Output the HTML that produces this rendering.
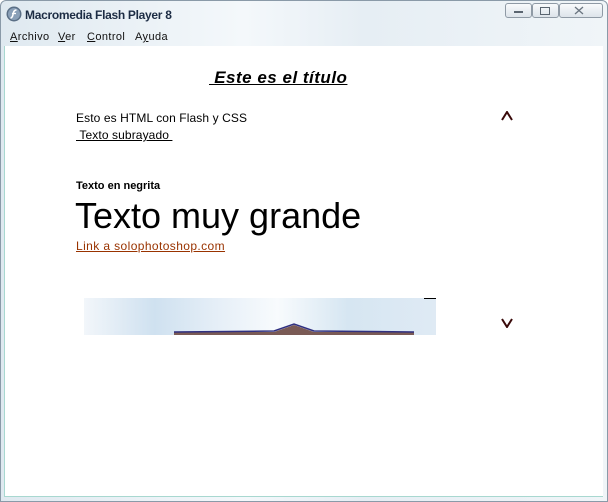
<!DOCTYPE html>
<html><head><meta charset="utf-8"><style>
*{margin:0;padding:0}
body{width:608px;height:502px;position:relative;overflow:hidden;background:#fff;font-family:"Liberation Sans",sans-serif}
.frame{position:absolute;left:0;top:0;width:606px;height:500px;border:1px solid #8a9aa8;border-radius:6px 6px 0 0;background:linear-gradient(90deg,#dfe9f0,#f4f8fb 40%,#e6eef4 60%,#f0f5f8)}
.content{position:absolute;left:4px;top:46px;width:598px;height:450px;background:#fff;border-left:1px solid #a8d8d0;border-bottom:1px solid #a8d8d0}
.t{position:absolute;white-space:nowrap}
.m{position:absolute;top:31px;font-size:11px;color:#111;letter-spacing:0.4px}
.btn{position:absolute;top:3px;height:13px;border:1px solid #8f9aa5;background:linear-gradient(#f8fafc,#dde4ea);border-radius:3px}
</style></head><body>
<div class="frame"></div>
<svg style="position:absolute;left:6px;top:6px" width="16" height="16"><circle cx="8" cy="8" r="7.5" fill="#5a6f86"/><circle cx="8" cy="8" r="6" fill="#8aa0b8"/><path d="M10.5 4C8 4 7.5 6 7 8.5S5.5 12 4.5 12" stroke="#fff" stroke-width="1.6" fill="none"/><path d="M6 7.5h4" stroke="#fff" stroke-width="1.3"/></svg>
<div class="t" style="left:25px;top:8px;font-size:12px;font-weight:bold;color:#1c2c44;letter-spacing:-0.3px">Macromedia Flash Player 8</div>
<div class="btn" style="left:505px;width:25px"></div><div class="btn" style="left:532px;width:25px"></div><div class="btn" style="left:559px;width:42px"></div>
<div class="t" style="left:514px;top:11px;width:9px;height:2px;background:#5a6570"></div>
<div class="t" style="left:540px;top:7px;width:8px;height:6px;border:1px solid #5a6570"></div>
<svg style="position:absolute;left:574px;top:6px" width="10" height="9"><path d="M1 1L9 8M9 1L1 8" stroke="#6a7580" stroke-width="1.3"/></svg>
<div class="m" style="left:10px"><u>A</u>rchivo</div>
<div class="m" style="left:58px"><u>V</u>er</div>
<div class="m" style="left:87px"><u>C</u>ontrol</div>
<div class="m" style="left:135px">A<u>y</u>uda</div>
<div class="content"></div>
<div class="t" style="left:209px;top:68px;font-size:17px;font-weight:bold;font-style:italic;text-decoration:underline;letter-spacing:0.5px">&nbsp;Este es el título</div>
<div class="t" style="left:76px;top:111px;font-size:12px;letter-spacing:0.1px">Esto es HTML con Flash y CSS</div>
<div class="t" style="left:76px;top:128px;font-size:12px;text-decoration:underline;letter-spacing:0.1px">&nbsp;Texto subrayado&nbsp;</div>
<div class="t" style="left:76px;top:180px;font-size:11px;font-weight:bold">Texto en negrita</div>
<div class="t" style="left:75px;top:195px;font-size:36px">Texto muy grande</div>
<div class="t" style="left:76px;top:239px;font-size:12px;color:#993300;text-decoration:underline;letter-spacing:0.4px">Link a solophotoshop.com</div>
<svg style="position:absolute;left:501px;top:111px" width="12" height="10"><path d="M1 9L6 1L11 9" stroke="#3a0a0a" stroke-width="2" fill="none"/></svg>
<svg style="position:absolute;left:501px;top:318px" width="12" height="10"><path d="M1 1L6 9L11 1" stroke="#3a0a0a" stroke-width="2" fill="none"/></svg>
<div class="t" style="left:84px;top:298px;width:352px;height:37px;background:linear-gradient(90deg,#f2f6fa 0%,#cfe1f0 20%,#e8f0f8 40%,#f8fbfd 55%,#d6e6f2 75%,#dfeaf4 100%)"></div>
<svg style="position:absolute;left:84px;top:298px" width="352" height="37"><path d="M90 37L90 34L190 34L210 27L230 34L330 34L330 37Z" fill="#7a5a55"/><path d="M90 34L190 33L210 26L230 33L330 34" stroke="#303080" stroke-width="1.5" fill="none"/><rect x="340" y="0" width="12" height="1" fill="#000"/></svg>
</body></html>
